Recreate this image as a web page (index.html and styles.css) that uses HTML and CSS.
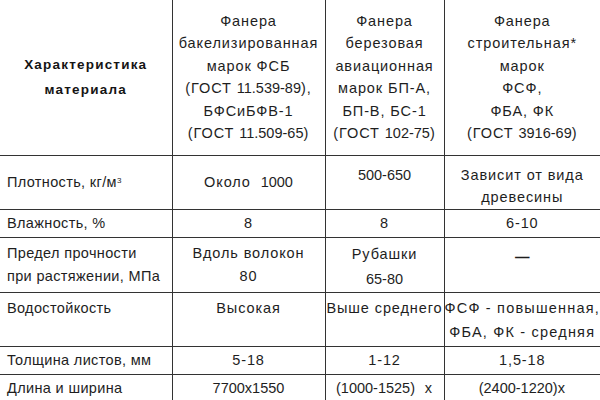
FILE: index.html
```html
<!DOCTYPE html>
<html lang="ru">
<head>
<meta charset="utf-8">
<title>Фанера</title>
<link rel="stylesheet" href="styles.css">
</head>
<body>
<table class="spec">
  <colgroup>
    <col class="c1"><col class="c2"><col class="c3"><col class="c4">
  </colgroup>
  <tr class="r-head">
    <th class="label-head">Характеристика<br>материала</th>
    <th>Фанера<br>бакелизированная<br>марок ФСБ<br>(ГОСТ <span class="num">11.539-89</span>),<br>БФСиБФВ-1<br>(ГОСТ <span class="num">11.509-65</span>)</th>
    <th>Фанера<br>березовая<br>авиационная<br>марок БП-А,<br>БП-В, БС-1<br>(ГОСТ <span class="num">102-75</span>)</th>
    <th>Фанера<br>строительная*<br>марок<br>ФСФ,<br>ФБА, ФК<br>(ГОСТ <span class="num">3916-69</span>)</th>
  </tr>
  <tr class="r-dens">
    <td>Плотность, кг/м<sup>3</sup></td>
    <td>Около&nbsp; <span class="num">1000</span></td>
    <td class="top"><span class="num">500-650</span></td>
    <td class="top">Зависит от вида<br>древесины</td>
  </tr>
  <tr class="r-hum">
    <td>Влажность, %</td>
    <td>8</td>
    <td>8</td>
    <td>6-10</td>
  </tr>
  <tr class="r-str">
    <td>Предел прочности<br>при растяжении, МПа</td>
    <td>Вдоль волокон<br>80</td>
    <td class="low">Рубашки<br><span class="num">65-80</span></td>
    <td class="top"><span class="dash">—</span></td>
  </tr>
  <tr class="r-water">
    <td>Водостойкость</td>
    <td>Высокая</td>
    <td>Выше среднего</td>
    <td>ФСФ - повышенная,<br>ФБА, ФК - средняя</td>
  </tr>
  <tr class="r-thick">
    <td>Толщина листов, мм</td>
    <td>5-18</td>
    <td>1-12</td>
    <td>1,5-18</td>
  </tr>
  <tr class="r-len">
    <td>Длина и ширина</td>
    <td><span class="num">7700x1550</span></td>
    <td><span class="num">(1000-1525)</span>&nbsp; x</td>
    <td><span class="num">(2400-1220)</span>x</td>
  </tr>
</table>
</body>
</html>
```

FILE: styles.css
```css
html, body {
  margin: 0;
  padding: 0;
  background: #ffffff;
}

body {
  font-family: "Liberation Sans", Arial, sans-serif;
  color: #1e1e1e;
  overflow: hidden;
}

.spec {
  width: 600px;
  border-collapse: collapse;
  table-layout: fixed;
}

.c1 { width: 172px; }
.c2 { width: 153px; }
.c3 { width: 119px; }
.c4 { width: 156px; }

.spec th,
.spec td {
  border: 1px solid #333333;
  padding: 0;
  font-size: 14.5px;
  font-weight: normal;
  letter-spacing: 0.9px;
  line-height: 22.5px;
  text-align: center;
  vertical-align: middle;
  white-space: nowrap;
}

.spec tr:first-child th { border-top: none; }
.spec th:first-child,
.spec td:first-child { border-left: none; }
.spec th:last-child,
.spec td:last-child { border-right: none; }

.spec td:first-child {
  text-align: left;
  padding-left: 7px;
  letter-spacing: 0.35px;
}

.spec th.label-head {
  font-weight: bold;
  font-size: 13.5px;
  letter-spacing: 1.2px;
  line-height: 25px;
  color: #141414;
  padding-top: 0;
}

.num { letter-spacing: 0; }

.spec sup {
  font-size: 8px;
  line-height: 0;
  vertical-align: 4px;
}

.dash {
  font-weight: bold;
  letter-spacing: 0;
}

.r-head { height: 155px; }
.r-dens { height: 53px; }
.r-hum { height: 28px; }
.r-str { height: 54px; }
.r-water { height: 54px; }
.r-thick { height: 28px; }
.r-len { height: 28px; }

.spec td.top {
  vertical-align: top;
  padding-top: 8px;
}

.spec td.low {
  vertical-align: top;
  padding-top: 4px;
  line-height: 25px;
}

.r-water td {
  vertical-align: top;
  padding-top: 3px;
  line-height: 24px;
}

.r-water td:last-child {
  letter-spacing: 1.2px;
}
```
